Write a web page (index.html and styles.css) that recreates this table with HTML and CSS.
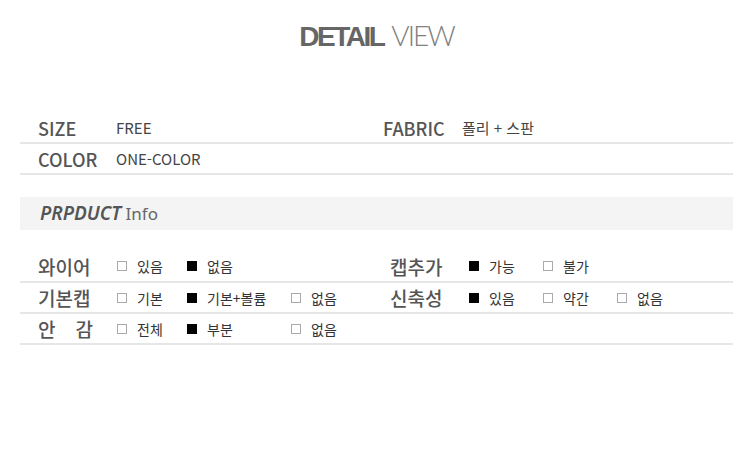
FILE: index.html
```html
<!DOCTYPE html>
<html lang="ko">

<head>
    <meta charset="UTF-8">
    <meta name="viewport" content="width=device-width, initial-scale=1.0">
    <title>Detail View</title>
    <link rel="stylesheet" href="styles.css">
</head>

<body>
    <div class="page">
        <h1 class="title"><b>DETAIL</b><span>VIEW</span></h1>

        <div class="spec">
            <div class="spec-row">
                <div class="spec-label">SIZE</div>
                <div class="spec-value">FREE</div>
                <div class="spec-label">FABRIC</div>
                <div class="spec-value">폴리 + 스판</div>
            </div>
            <div class="spec-row">
                <div class="spec-label">COLOR</div>
                <div class="spec-value">ONE-COLOR</div>
                <div></div>
                <div></div>
            </div>
        </div>

        <div class="info-bar"><b>PRPDUCT</b> Info</div>

        <div class="info">
            <div class="info-row">
                <div class="info-label">와이어</div>
                <div class="opt"><i class="box"></i>있음</div>
                <div class="opt"><i class="box on"></i>없음</div>
                <div></div>
                <div class="info-label">캡추가</div>
                <div class="opt"><i class="box on"></i>가능</div>
                <div class="opt"><i class="box"></i>불가</div>
                <div></div>
            </div>
            <div class="info-row">
                <div class="info-label">기본캡</div>
                <div class="opt"><i class="box"></i>기본</div>
                <div class="opt"><i class="box on"></i>기본+볼륨</div>
                <div class="opt"><i class="box"></i>없음</div>
                <div class="info-label">신축성</div>
                <div class="opt"><i class="box on"></i>있음</div>
                <div class="opt"><i class="box"></i>약간</div>
                <div class="opt"><i class="box"></i>없음</div>
            </div>
            <div class="info-row">
                <div class="info-label spread"><span>안</span><span>감</span></div>
                <div class="opt"><i class="box"></i>전체</div>
                <div class="opt"><i class="box on"></i>부분</div>
                <div class="opt"><i class="box"></i>없음</div>
                <div></div>
                <div></div>
                <div></div>
                <div></div>
            </div>
        </div>
    </div>
</body>

</html>
```

FILE: styles.css
```css
body {
    margin: 0;
    padding: 0;
    background-color: #fff;
    font-family: "Noto Sans", "Noto Sans CJK KR", sans-serif;
    color: #444;
}

.page {
    width: 713px;
    margin-left: 20px;
}

.title {
    margin: 0;
    padding-top: 15px;
    height: 40px;
    line-height: 40px;
    text-align: center;
    font-family: "Liberation Sans", sans-serif;
    font-size: 28px;
    font-weight: normal;
    color: #666;
}

.title b {
    letter-spacing: -2.5px;
    margin-right: 8px;
}

.title span {
    font-family: "Lato", "Liberation Sans", sans-serif;
    font-weight: 300;
    letter-spacing: -2px;
    color: #808080;
}

.spec {
    margin-top: 58px;
}

.spec-row {
    display: grid;
    grid-template-columns: 78px 267px 79px 1fr;
    align-items: center;
    height: 29px;
    padding-left: 18px;
    border-bottom: 2px solid #e6e6e6;
}

.spec-label {
    font-family: "Noto Sans CJK KR", sans-serif;
    font-size: 18px;
    font-weight: 500;
    color: #555;
}

.spec-value {
    font-family: "Noto Sans CJK KR", sans-serif;
    font-size: 15px;
    color: #444;
}

.info-bar {
    margin-top: 22px;
    height: 33px;
    line-height: 33px;
    padding-left: 20px;
    background-color: #f4f4f4;
    font-size: 17px;
    color: #666;
}

.info-bar b {
    font-size: 19px;
    font-style: italic;
    font-weight: 600;
    color: #555;
}

.info {
    margin-top: 21px;
}

.info-row {
    display: grid;
    grid-template-columns: 79px 70px 104px 99px 79px 74px 74px 1fr;
    align-items: center;
    height: 30px;
    padding-left: 18px;
    border-bottom: 2px solid #e6e6e6;
}

.info-row + .info-row {
    height: 29px;
}

.info-label {
    font-family: "Noto Sans CJK KR", sans-serif;
    font-size: 19px;
    font-weight: 500;
    color: #555;
}

.spread {
    display: flex;
    justify-content: space-between;
    width: 55px;
}

.opt {
    display: flex;
    align-items: center;
    font-family: "Noto Sans CJK KR", sans-serif;
    font-size: 14px;
    color: #333;
}

.box {
    display: inline-block;
    width: 8px;
    height: 8px;
    margin-right: 10px;
    border: 1px solid #aaa;
}

.box.on {
    width: 10px;
    height: 10px;
    border: none;
    background-color: #000;
}
```
